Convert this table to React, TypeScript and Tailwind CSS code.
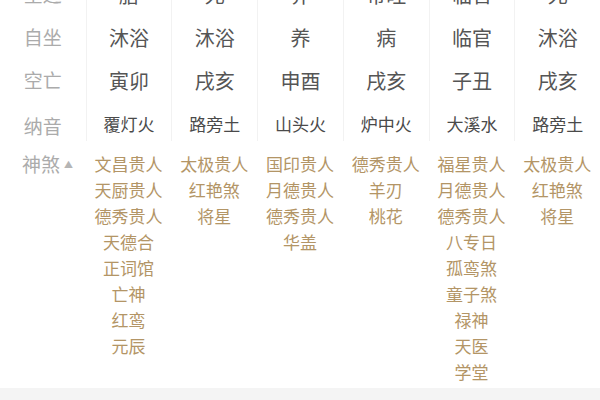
import React from "react";

const font = { fontFamily: '"Noto Sans CJK SC", "Noto Sans", sans-serif' };

const rows: { label: string; values: string[]; small?: boolean }[] = [
  { label: "星运", values: ["胎", "死", "养", "帝旺", "临官", "死"] },
  { label: "自坐", values: ["沐浴", "沐浴", "养", "病", "临官", "沐浴"] },
  { label: "空亡", values: ["寅卯", "戌亥", "申酉", "戌亥", "子丑", "戌亥"] },
  { label: "纳音", values: ["覆灯火", "路旁土", "山头火", "炉中火", "大溪水", "路旁土"], small: true },
];

const shensha: string[][] = [
  ["文昌贵人", "天厨贵人", "德秀贵人", "天德合", "正词馆", "亡神", "红鸾", "元辰"],
  ["太极贵人", "红艳煞", "将星"],
  ["国印贵人", "月德贵人", "德秀贵人", "华盖"],
  ["德秀贵人", "羊刃", "桃花"],
  ["福星贵人", "月德贵人", "德秀贵人", "八专日", "孤鸾煞", "童子煞", "禄神", "天医", "学堂"],
  ["太极贵人", "红艳煞", "将星"],
];

export default function App() {
  return (
    <div className="w-[600px] h-[400px] overflow-hidden bg-white" style={font}>
      <div className="-mt-[27px]">
        {rows.map((r, i) => (
          <div
            key={r.label}
            className={`grid grid-cols-7 ${i === rows.length - 1 ? "h-[33px]" : "h-[43px]"}`}
          >
            <div
              className={`flex justify-center text-[19px] text-[#ababab] ${
                i === rows.length - 1 ? "items-start pt-[10px]" : "items-center"
              }`}
            >
              {r.label}
            </div>
            {r.values.map((v, j) => (
              <div
                key={j}
                className={`flex justify-center border-l border-[#f2f2f2] ${
                  r.small
                    ? "items-start pt-[11px] text-[17px] leading-[22px] text-[#4a4a4a]"
                    : "items-center text-[20px] text-[#555]"
                }`}
              >
                {v}
              </div>
            ))}
          </div>
        ))}
      </div>
      <div className="grid grid-cols-7 pt-[16px] h-[253px]">
        <div className="flex items-start pl-[22px] text-[19px] leading-[26px] text-[#ababab]">
          <span>神煞</span>
          <span className="ml-[4px] mt-[1px] text-[9px] text-[#b5b5b5]">▲</span>
        </div>
        {shensha.map((col, j) => (
          <div key={j} className="flex flex-col items-center text-[17px] leading-[26px] text-[#b39566]">
            {col.map((s, k) => (
              <span key={k}>{s}</span>
            ))}
          </div>
        ))}
      </div>
      <div className="h-[20px] bg-[#f4f4f4]" />
    </div>
  );
}
